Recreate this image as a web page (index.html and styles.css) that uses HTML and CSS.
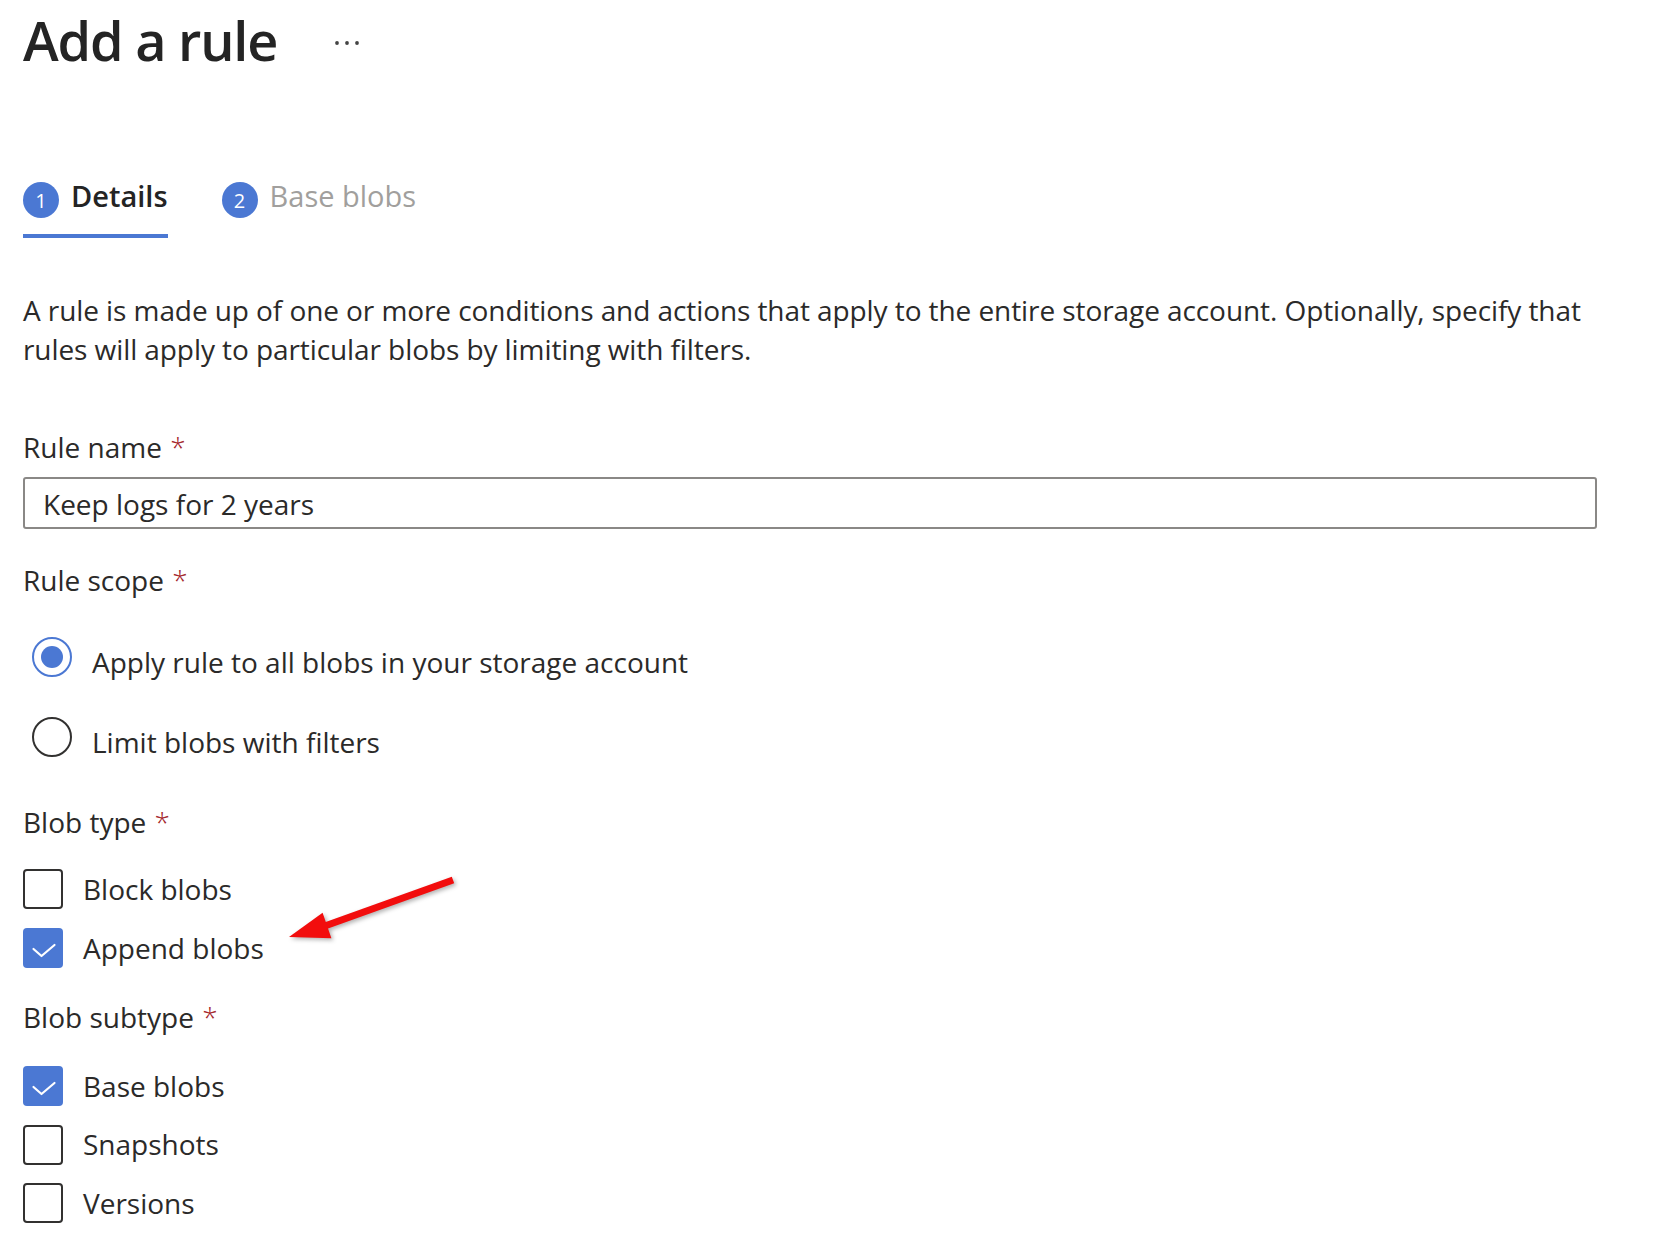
FILE: index.html
```html
<!DOCTYPE html>
<html lang="en">
<head>
<meta charset="utf-8">
<title>Add a rule</title>
<link rel="stylesheet" href="styles.css">
</head>
<body>
<div class="page">
  <header class="header">
    <h1 class="title">Add a rule</h1>
    <svg class="more" width="30" height="10" viewBox="0 0 30 10" aria-label="More">
      <circle cx="4" cy="5" r="1.9"/>
      <circle cx="14" cy="5" r="1.9"/>
      <circle cx="24" cy="5" r="1.9"/>
    </svg>
  </header>

  <nav class="tabs">
    <div class="tab tab-active">
      <span class="step">1</span>
      <span class="tab-label">Details</span>
    </div>
    <div class="tab">
      <span class="step">2</span>
      <span class="tab-label tab-label-muted">Base blobs</span>
    </div>
  </nav>

  <p class="intro">A rule is made up of one or more conditions and actions that apply to the entire storage account. Optionally, specify that rules will apply to particular blobs by limiting with filters.</p>

  <div class="field field-name">
    <label class="label">Rule name <span class="req">*</span></label>
    <input class="text-input" type="text" value="Keep logs for 2 years">
  </div>

  <div class="field field-scope">
    <div class="label">Rule scope <span class="req">*</span></div>
    <div class="radios">
      <div class="radio-row">
        <span class="radio radio-on"><span class="radio-dot"></span></span>
        <span class="option-text">Apply rule to all blobs in your storage account</span>
      </div>
      <div class="radio-row">
        <span class="radio"></span>
        <span class="option-text">Limit blobs with filters</span>
      </div>
    </div>
  </div>

  <div class="field field-type">
    <div class="label">Blob type <span class="req">*</span></div>
    <div class="checks">
      <div class="check-row">
        <span class="checkbox"></span>
        <span class="check-text">Block blobs</span>
      </div>
      <div class="check-row">
        <span class="checkbox checkbox-on">
          <svg width="40" height="40" viewBox="0 0 40 40"><path d="M10.5 21 L18.5 28 L31.5 17" /></svg>
        </span>
        <span class="check-text">Append blobs</span>
      </div>
    </div>
  </div>

  <div class="field field-subtype">
    <div class="label">Blob subtype <span class="req">*</span></div>
    <div class="checks checks-sub">
      <div class="check-row">
        <span class="checkbox checkbox-on">
          <svg width="40" height="40" viewBox="0 0 40 40"><path d="M10.5 21 L18.5 28 L31.5 17" /></svg>
        </span>
        <span class="check-text">Base blobs</span>
      </div>
      <div class="check-row">
        <span class="checkbox"></span>
        <span class="check-text">Snapshots</span>
      </div>
      <div class="check-row">
        <span class="checkbox"></span>
        <span class="check-text">Versions</span>
      </div>
    </div>
  </div>

  <svg class="arrow" width="185" height="80" viewBox="280 870 185 80" aria-hidden="true">
    <line x1="453" y1="880" x2="322" y2="927" />
    <polygon points="289,937 322.6,912.7 331.4,938.3" />
  </svg>
</div>
</body>
</html>
```

FILE: styles.css
```css
* {
  box-sizing: border-box;
}

html, body {
  margin: 0;
  padding: 0;
  background: #ffffff;
}

body {
  font-family: "Open Sans", "Noto Sans", sans-serif;
  color: #2b2a29;
  font-size: 28px;
}

.page {
  position: relative;
  padding: 0 23px;
  width: 1653px;
  height: 1245px;
  overflow: hidden;
}

.header {
  display: flex;
  align-items: flex-start;
  height: 80px;
}

.title {
  margin: 0;
  font-size: 54px;
  line-height: 80px;
  font-weight: 600;
  color: #242424;
  letter-spacing: -1.2px;
}

.more {
  margin-left: 56px;
  margin-top: 38px;
  fill: #444444;
}

.tabs {
  display: flex;
  gap: 54px;
  margin-top: 96px;
}

.tab {
  display: flex;
  align-items: flex-start;
  gap: 12px;
  padding-bottom: 16px;
  border-bottom: 4px solid transparent;
}

.tab-active {
  border-bottom-color: #4b78d3;
}

.step {
  width: 36px;
  height: 36px;
  margin-top: 6px;
  border-radius: 50%;
  background: #4b78d3;
  color: #ffffff;
  font-size: 20px;
  line-height: 38px;
  text-align: center;
  font-weight: 500;
}

.tab-label {
  font-size: 29px;
  line-height: 40px;
  font-weight: 600;
  color: #242424;
}

.tab-label-muted {
  font-weight: 400;
  color: #a19f9d;
}

.intro {
  margin: 53px 0 0;
  width: 1610px;
  line-height: 39px;
  letter-spacing: -0.08px;
}

.label {
  display: block;
  line-height: 39px;
}

.req {
  color: #a4262c;
  margin-left: 1px;
  font-weight: 300;
}

.field-name {
  margin-top: 59px;
}

.text-input {
  display: block;
  width: 1574px;
  height: 52px;
  margin-top: 10px;
  padding: 2px 0 0 18px;
  border: 2px solid #8a8886;
  border-radius: 3px;
  font: inherit;
  color: #2b2a29;
  background: #ffffff;
  outline: none;
}

.field-scope {
  margin-top: 32px;
}

.radios {
  display: flex;
  flex-direction: column;
  gap: 35px;
  margin-top: 37px;
  padding-left: 9px;
}

.radio-row {
  display: flex;
  align-items: flex-start;
  gap: 20px;
}

.radio {
  width: 40px;
  height: 40px;
  border-radius: 50%;
  border: 2px solid #323130;
  display: flex;
  align-items: center;
  justify-content: center;
  flex: none;
}

.radio-on {
  border-color: #4b78d3;
}

.radio-dot {
  width: 22px;
  height: 22px;
  border-radius: 50%;
  background: #4b78d3;
}

.option-text {
  margin-top: 6px;
  line-height: 39px;
}

.field-type {
  margin-top: 41px;
}

.checks {
  display: flex;
  flex-direction: column;
  gap: 19px;
  margin-top: 27px;
}

.checks-sub {
  gap: 18.5px;
  margin-top: 29px;
}

.check-row {
  display: flex;
  align-items: center;
  gap: 20px;
  height: 40px;
}

.checkbox {
  width: 40px;
  height: 40px;
  border: 2px solid #323130;
  border-radius: 4px;
  flex: none;
}

.checkbox-on {
  border: none;
  background: #4b78d3;
}

.checkbox-on svg {
  display: block;
}

.checkbox-on path {
  fill: none;
  stroke: #ffffff;
  stroke-width: 2.2;
  stroke-linecap: round;
  stroke-linejoin: round;
}

.check-text {
  line-height: 39px;
}

.field-subtype {
  margin-top: 30px;
}

.arrow {
  position: absolute;
  left: 280px;
  top: 870px;
  filter: drop-shadow(2px 2px 2px rgba(0, 0, 0, 0.3));
}

.arrow line {
  stroke: #f20d0d;
  stroke-width: 7;
}

.arrow polygon {
  fill: #f20d0d;
}
```
